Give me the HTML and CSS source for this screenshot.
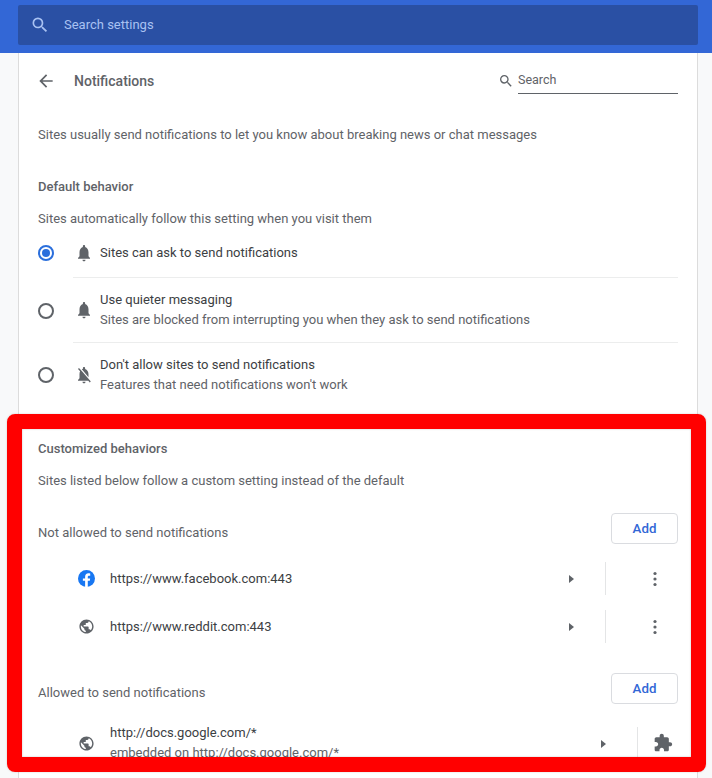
FILE: index.html
```html
<!DOCTYPE html>
<html lang="en">
<head>
<meta charset="utf-8">
<title>Notifications</title>
<link rel="stylesheet" href="styles.css">
</head>
<body>
<header class="topbar">
  <div class="topsearch">
    <svg class="topsearch-icon" viewBox="0 0 24 24"><path d="M15.5 14h-.79l-.28-.27A6.47 6.47 0 0 0 16 9.5 6.5 6.5 0 1 0 9.5 16c1.61 0 3.09-.59 4.23-1.57l.27.28v.79l5 4.99L20.49 19l-4.99-5zm-6 0C7.01 14 5 11.99 5 9.5S7.01 5 9.5 5 14 7.01 14 9.5 11.99 14 9.5 14z"/></svg>
    <span class="topsearch-text">Search settings</span>
  </div>
</header>
<main class="card">
  <div class="subhead">
    <svg class="back" viewBox="0 0 24 24"><path d="M20 11H7.83l5.59-5.59L12 4l-8 8 8 8 1.41-1.41L7.83 13H20v-2z"/></svg>
    <h1 class="subhead-title">Notifications</h1>
    <svg class="sub-search-icon" viewBox="0 0 24 24"><path d="M15.5 14h-.79l-.28-.27A6.47 6.47 0 0 0 16 9.5 6.5 6.5 0 1 0 9.5 16c1.61 0 3.09-.59 4.23-1.57l.27.28v.79l5 4.99L20.49 19l-4.99-5zm-6 0C7.01 14 5 11.99 5 9.5S7.01 5 9.5 5 14 7.01 14 9.5 11.99 14 9.5 14z"/></svg>
    <div class="sub-search">Search</div>
  </div>
  <p class="line intro">Sites usually send notifications to let you know about breaking news or chat messages</p>
  <h2 class="line heading heading-default">Default behavior</h2>
  <p class="line secondary-line">Sites automatically follow this setting when you visit them</p>

  <div class="option option-first">
    <span class="radio radio-on"></span>
    <div class="option-body">
      <svg class="bell" viewBox="0 0 24 24" preserveAspectRatio="none"><path d="M12 22c1.1 0 2-.9 2-2h-4c0 1.1.9 2 2 2zm6-6v-5c0-3.07-1.63-5.64-4.5-6.32V4c0-.83-.67-1.5-1.5-1.5s-1.5.67-1.5 1.5v.68C7.64 5.36 6 7.92 6 11v5l-2 2v1h16v-1l-2-2z"/></svg>
      <div class="option-label"><div class="primary">Sites can ask to send notifications</div></div>
    </div>
  </div>
  <div class="option option-two">
    <span class="radio"></span>
    <div class="option-body">
      <svg class="bell" viewBox="0 0 24 24" preserveAspectRatio="none"><path d="M12 22c1.1 0 2-.9 2-2h-4c0 1.1.9 2 2 2zm6-6v-5c0-3.07-1.63-5.64-4.5-6.32V4c0-.83-.67-1.5-1.5-1.5s-1.5.67-1.5 1.5v.68C7.64 5.36 6 7.92 6 11v5l-2 2v1h16v-1l-2-2z"/></svg>
      <div class="option-label">
        <div class="primary">Use quieter messaging</div>
        <div class="secondary">Sites are blocked from interrupting you when they ask to send notifications</div>
      </div>
    </div>
  </div>
  <div class="option option-two option-last">
    <span class="radio"></span>
    <div class="option-body">
      <svg class="bell" viewBox="0 0 24 24" preserveAspectRatio="none"><path d="M20 18.69L7.84 6.14 5.27 3.49 4 4.76l2.8 2.8v.01c-.52.99-.8 2.16-.8 3.42v5l-2 2v1h13.730l2 2L21 19.720l-1-1.030zM12 22c1.110 0 2-.89 2-2h-4c0 1.110.89 2 2 2zm6-7.320V11c0-3.080-1.640-5.640-4.500-6.320V4c0-.83-.67-1.500-1.500-1.500s-1.500.67-1.500 1.500v.68c-.15.03-.29.08-.42.12-.1.03-.2.07-.3.11h-.01c-.2.08-.4.17-.59.27-.01 0-.01 0-.02.01L18 14.680z"/></svg>
      <div class="option-label">
        <div class="primary">Don't allow sites to send notifications</div>
        <div class="secondary">Features that need notifications won't work</div>
      </div>
    </div>
  </div>

  <h2 class="line heading heading-custom">Customized behaviors</h2>
  <p class="line secondary-line">Sites listed below follow a custom setting instead of the default</p>

  <div class="list-head list-head-first">
    <span class="list-title">Not allowed to send notifications</span>
    <button class="add">Add</button>
  </div>
  <div class="site">
    <svg class="favicon" viewBox="0 0 16 16"><circle cx="8" cy="8" r="8" fill="#1877f2"/><path fill="#fff" d="M9.2 16V10.2h1.9l.35-2.3H9.2V6.5c0-.65.3-1.2 1.25-1.2h1.05V3.3c-.55-.1-1.15-.15-1.75-.15-1.9 0-3.05 1.15-3.05 3.15v1.6H4.6v2.3h2.1V16z"/></svg>
    <span class="site-name">https://www.facebook.com:443</span>
    <span class="caret"></span>
    <span class="sep"></span>
    <span class="site-action"><svg class="dots" viewBox="0 0 4 16"><circle cx="2" cy="2.5" r="1.6"/><circle cx="2" cy="8" r="1.6"/><circle cx="2" cy="13.5" r="1.6"/></svg></span>
  </div>
  <div class="site">
    <svg class="favicon globe" viewBox="0 0 24 24"><path d="M12 2C6.48 2 2 6.48 2 12s4.48 10 10 10 10-4.480 10-10S17.520 2 12 2zm-1 17.930c-3.950-.490-7-3.850-7-7.930 0-.620.080-1.210.210-1.790L9 15v1c0 1.100.9 2 2 2v1.930zm6.900-2.540c-.260-.810-1-1.390-1.900-1.390h-1v-3c0-.550-.450-1-1-1H8v-2h2c.550 0 1-.450 1-1V7h2c1.100 0 2-.9 2-2v-.410c2.930 1.190 5 4.060 5 7.410 0 2.080-.800 3.970-2.100 5.390z"/></svg>
    <span class="site-name">https://www.reddit.com:443</span>
    <span class="caret"></span>
    <span class="sep"></span>
    <span class="site-action"><svg class="dots" viewBox="0 0 4 16"><circle cx="2" cy="2.5" r="1.6"/><circle cx="2" cy="8" r="1.6"/><circle cx="2" cy="13.5" r="1.6"/></svg></span>
  </div>

  <div class="list-head list-head-second">
    <span class="list-title">Allowed to send notifications</span>
    <button class="add">Add</button>
  </div>
  <div class="site site-two">
    <svg class="favicon globe" viewBox="0 0 24 24"><path d="M12 2C6.48 2 2 6.48 2 12s4.48 10 10 10 10-4.480 10-10S17.520 2 12 2zm-1 17.930c-3.950-.490-7-3.850-7-7.930 0-.620.080-1.210.210-1.790L9 15v1c0 1.100.9 2 2 2v1.930zm6.900-2.540c-.260-.810-1-1.390-1.900-1.390h-1v-3c0-.550-.450-1-1-1H8v-2h2c.550 0 1-.450 1-1V7h2c1.100 0 2-.9 2-2v-.410c2.930 1.190 5 4.060 5 7.410 0 2.080-.800 3.970-2.100 5.390z"/></svg>
    <div class="site-name">
      <div class="primary">http://docs.google.com/*</div>
      <div class="secondary">embedded on http://docs.google.com/*</div>
    </div>
    <span class="caret"></span>
    <span class="sep"></span>
    <span class="site-action"><svg class="puzzle" viewBox="0 0 24 24"><path d="M20.500 11H19V7c0-1.100-.9-2-2-2h-4V3.500C13 2.120 11.880 1 10.500 1S8 2.120 8 3.500V5H4c-1.100 0-1.990.9-1.990 2v3.800H3.500c1.490 0 2.700 1.210 2.700 2.700s-1.210 2.700-2.700 2.700H2V20c0 1.100.9 2 2 2h3.800v-1.500c0-1.490 1.210-2.700 2.700-2.700 1.490 0 2.700 1.210 2.700 2.700V22H17c1.100 0 2-.9 2-2v-4h1.500c1.380 0 2.500-1.120 2.500-2.500S21.880 11 20.500 11z"/></svg></span>
  </div>
</main>
<div class="highlight"></div>
</body>
</html>
```

FILE: styles.css
```css
* { box-sizing: border-box; }
html, body { margin: 0; padding: 0; height: 778px; overflow: hidden; }
body {
  background: #f8f9fa;
  font-family: Roboto, "Liberation Sans", sans-serif;
  font-size: 13px;
  color: #5f6368;
  position: relative;
}
.topbar {
  height: 53px;
  background: #3367d6;
  padding: 5px 14px 0 18px;
}
.topsearch {
  height: 40px;
  background: #2a50a4;
  border-radius: 2px;
  display: flex;
  align-items: center;
  padding-left: 12px;
}
.topsearch-icon { width: 20px; height: 20px; fill: #a9c2f2; margin-top: -1px; }
.topsearch-text { margin: -2px 0 0 14px; color: #a9c2f2; font-size: 13px; }
.card {
  margin: 0 14px 0 18px;
  height: 725px;
  background: #fff;
  border-left: 1px solid #dcdcdc;
  border-right: 1px solid #dcdcdc;
  padding: 0 19px 0 19px;
  overflow: hidden;
}
.subhead { height: 56px; display: flex; align-items: center; }
.back { width: 20px; height: 20px; fill: #5f6368; margin-left: -2px; }
.subhead-title { margin: 0 0 0 18px; font-size: 14px; font-weight: 500; color: #5f6368; flex: 1; }
.sub-search-icon { width: 16px; height: 16px; fill: #5f6368; margin: 0 4px 0 0; }
.sub-search {
  width: 160px;
  height: 27px;
  margin-top: -1px;
  border-bottom: 1px solid #5f6368;
  font-size: 12.5px;
  padding-top: 5px;
  line-height: 15px;
}
.line { margin: 0; line-height: 16px; font-size: 13px; font-weight: 400; }
.intro { margin-top: 18px; }
.heading { font-weight: 500; font-size: 13px; }
.heading-default { margin-top: 36px; }
.heading-custom { margin-top: 33px; }
.secondary-line { margin-top: 16px; }
.option { display: flex; align-items: center; }
.option-first { margin-top: 1px; height: 50px; }
.option-two { height: 65px; }
.option-body {
  flex: 1;
  align-self: stretch;
  display: flex;
  align-items: center;
  border-bottom: 1px solid #eceded;
}
.option-last .option-body { border-bottom-color: transparent; }
.option-label { flex: 1; margin-left: 7px; display: flex; flex-direction: column; gap: 4px; }
.radio {
  width: 16px;
  height: 16px;
  border-radius: 50%;
  border: 2px solid #5f6368;
  margin-right: 19px;
  flex: none;
  position: relative;
}
.option-last .radio { margin-top: -1px; }
.radio-on { border-color: #2b6fdc; }
.radio-on::after {
  content: "";
  position: absolute;
  inset: 2px;
  border-radius: 50%;
  background: #2b6fdc;
}
.bell { width: 18px; height: 20px; fill: #5f6368; margin-left: 2px; flex: none; }
.primary { color: #3c4043; line-height: 16px; }
.secondary { color: #5f6368; line-height: 16px; }
.list-head { display: flex; align-items: center; justify-content: space-between; height: 31px; }
.list-head-first { margin-top: 24px; }
.list-head-second { margin-top: 23px; }
.list-title { font-size: 13px; margin-top: 8px; }
.add {
  width: 67px;
  height: 31px;
  background: #fff;
  border: 1px solid #dadce0;
  border-radius: 4px;
  color: #3367d6;
  font: 500 13.3px Roboto, "Liberation Sans", sans-serif;
  padding: 0;
}
.site { display: flex; align-items: center; height: 48px; padding-left: 40px; }
.list-head + .site { margin-top: 10px; }
.list-head-second + .site { margin-top: 9px; height: 60px; }
.site-two .site-name { display: flex; flex-direction: column; gap: 4px; }
.favicon { width: 17px; height: 17px; flex: none; }
.globe { fill: #5f6368; }
.site-name { flex: 1; margin-left: 15px; color: #3c4043; }
.caret {
  width: 0; height: 0;
  border-left: 5px solid #5f6368;
  border-top: 4px solid transparent;
  border-bottom: 4px solid transparent;
  flex: none;
  margin-top: 1px;
}
.sep { width: 1px; height: 33px; background: #e4e5e6; margin-left: 31px; flex: none; }
.site-action { width: 72px; display: flex; justify-content: flex-end; padding-right: 21px; flex: none; }
.dots { width: 4px; height: 16px; fill: #5f6368; margin-top: 1px; }
.site-two .site-action { width: 40px; padding-right: 5px; }
.puzzle { width: 20px; height: 20px; fill: #5f6368; }
.highlight {
  position: absolute;
  left: 7px;
  top: 414px;
  width: 699px;
  height: 358px;
  border: 15px solid #ff0000;
  border-radius: 8px;
  box-shadow: inset 0 0 2px rgba(0,0,0,.25), 0 0 2px rgba(0,0,0,.2);
}
```
